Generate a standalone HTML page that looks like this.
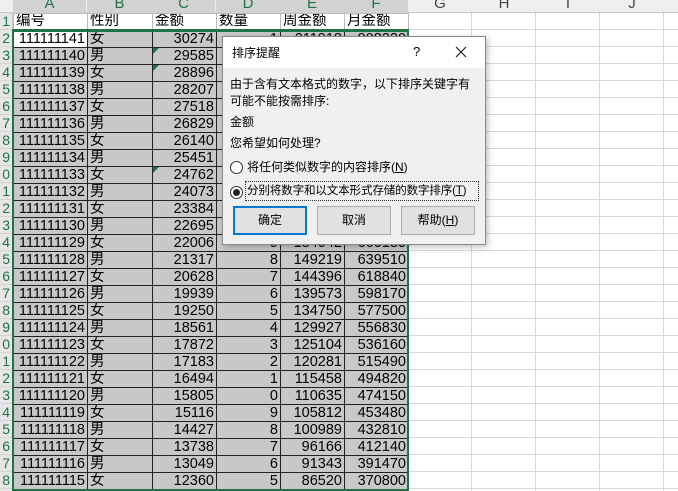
<!DOCTYPE html>
<html><head><meta charset="utf-8">
<style>
*{margin:0;padding:0;box-sizing:border-box}
body{width:678px;height:491px;overflow:hidden;background:#fff;font-family:"Liberation Sans","Noto Sans CJK SC",sans-serif;position:relative}
.hdr{position:absolute;top:0;left:0;height:13px;width:678px;background:#efefef;border-bottom:1px solid #c6c6c6}
.hdr span{position:absolute;top:-5px;font-size:15px;color:#444;text-align:center}
.hdr span.s{color:#217346;background:#d2d2d2;top:0;height:13px}
.hdr span.s b{position:relative;top:-5px;font-weight:normal}
.rn{position:absolute;left:0;top:13px;width:13px;height:478px;background:#e6e6e6;border-right:1px solid #c6c6c6}
.rn div{height:17px;font-size:14px;color:#217346;line-height:17px;text-align:right;padding-right:2px;overflow:hidden;border-bottom:1px solid #d4d4d4}
.grid{position:absolute;left:13px;top:13px;width:665px;height:478px;
background-image:linear-gradient(#d9d9d9 1px,transparent 1px),linear-gradient(90deg,#d9d9d9 1px,transparent 1px);
background-size:100% 17px,64px 100%;background-position:0 16px,10px 0}
table{position:absolute;left:13px;top:13px;border-collapse:collapse;table-layout:fixed;font-size:14.5px}
td{height:17px;border:1px solid #222;padding:0 2px;line-height:15px;white-space:nowrap;overflow:hidden;background:#c8c8c8;color:#000;text-align:right;position:relative}
td.l{text-align:left}
tr.h td{background:#fff;border-color:#bbb;border-bottom:2px solid #217346}
td.w{background:#fff}
td.t::before{content:"";position:absolute;left:0;top:0;border-top:6px solid #217346;border-right:6px solid transparent}
.sel{position:absolute;left:12px;top:29px;width:397px;height:462px;border:2px solid #217346;pointer-events:none}
.dlg{position:absolute;left:222px;top:36px;width:264px;height:209px;background:#f0f0f0;border:1px solid #8a8a8a;box-shadow:2px 2px 6px rgba(0,0,0,.25);font-size:12px;color:#000;white-space:nowrap}
.tt{height:31px;background:#fff;position:relative}
.tt span{position:absolute;top:7px}
.body{padding:8px 7px;line-height:17px}
.rad{position:absolute;width:13px;height:13px;border:1px solid #333;border-radius:50%;background:#fff}
.btn{position:absolute;top:169px;width:74px;height:29px;background:#e1e1e1;border:1px solid #adadad;text-align:center;line-height:27px}
</style></head><body>
<div class="hdr">
<span class="s" style="left:13px;width:73px"><b>A</b></span>
<span class="s" style="left:87px;width:65px"><b>B</b></span>
<span class="s" style="left:152px;width:63px"><b>C</b></span>
<span class="s" style="left:216px;width:64px"><b>D</b></span>
<span class="s" style="left:280px;width:64px"><b>E</b></span>
<span class="s" style="left:344px;width:64px"><b>F</b></span>
<span style="left:408px;width:64px">G</span>
<span style="left:472px;width:64px">H</span>
<span style="left:536px;width:64px">I</span>
<span style="left:600px;width:64px">J</span>
</div>
<div class="rn"><div>1</div><div>2</div><div>3</div><div>4</div><div>5</div><div>6</div><div>7</div><div>8</div><div>9</div><div>0</div><div>1</div><div>2</div><div>3</div><div>4</div><div>5</div><div>6</div><div>7</div><div>8</div><div>9</div><div>0</div><div>1</div><div>2</div><div>3</div><div>4</div><div>5</div><div>6</div><div>7</div><div>8</div></div>
<div class="grid"></div>
<table>
<colgroup><col style="width:74px"><col style="width:65px"><col style="width:64px"><col style="width:64px"><col style="width:64px"><col style="width:64px"></colgroup>
<tr class="h"><td class="l">编号</td><td class="l">性别</td><td class="l">金额</td><td class="l">数量</td><td class="l">周金额</td><td class="l">月金额</td></tr>
<tr><td class="w">111111141</td><td class="l">女</td><td>30274</td><td>1</td><td>211918</td><td>908220</td></tr>
<tr><td>111111140</td><td class="l">男</td><td class="t">29585</td><td>0</td><td>207095</td><td>887550</td></tr>
<tr><td>111111139</td><td class="l">女</td><td class="t">28896</td><td>9</td><td>202272</td><td>866880</td></tr>
<tr><td>111111138</td><td class="l">男</td><td>28207</td><td>8</td><td>197449</td><td>846210</td></tr>
<tr><td>111111137</td><td class="l">女</td><td>27518</td><td>7</td><td>192626</td><td>825540</td></tr>
<tr><td>111111136</td><td class="l">男</td><td>26829</td><td>6</td><td>187803</td><td>804870</td></tr>
<tr><td>111111135</td><td class="l">女</td><td>26140</td><td>5</td><td>182980</td><td>784200</td></tr>
<tr><td>111111134</td><td class="l">男</td><td>25451</td><td>4</td><td>178157</td><td>763530</td></tr>
<tr><td>111111133</td><td class="l">女</td><td class="t">24762</td><td>3</td><td>173334</td><td>742860</td></tr>
<tr><td>111111132</td><td class="l">男</td><td>24073</td><td>2</td><td>168511</td><td>722190</td></tr>
<tr><td>111111131</td><td class="l">女</td><td>23384</td><td>1</td><td>163688</td><td>701520</td></tr>
<tr><td>111111130</td><td class="l">男</td><td>22695</td><td>0</td><td>158865</td><td>680850</td></tr>
<tr><td>111111129</td><td class="l">女</td><td>22006</td><td>9</td><td>154042</td><td>660180</td></tr>
<tr><td>111111128</td><td class="l">男</td><td>21317</td><td>8</td><td>149219</td><td>639510</td></tr>
<tr><td>111111127</td><td class="l">女</td><td>20628</td><td>7</td><td>144396</td><td>618840</td></tr>
<tr><td>111111126</td><td class="l">男</td><td>19939</td><td>6</td><td>139573</td><td>598170</td></tr>
<tr><td>111111125</td><td class="l">女</td><td>19250</td><td>5</td><td>134750</td><td>577500</td></tr>
<tr><td>111111124</td><td class="l">男</td><td>18561</td><td>4</td><td>129927</td><td>556830</td></tr>
<tr><td>111111123</td><td class="l">女</td><td>17872</td><td>3</td><td>125104</td><td>536160</td></tr>
<tr><td>111111122</td><td class="l">男</td><td>17183</td><td>2</td><td>120281</td><td>515490</td></tr>
<tr><td>111111121</td><td class="l">女</td><td>16494</td><td>1</td><td>115458</td><td>494820</td></tr>
<tr><td>111111120</td><td class="l">男</td><td>15805</td><td>0</td><td>110635</td><td>474150</td></tr>
<tr><td>111111119</td><td class="l">女</td><td>15116</td><td>9</td><td>105812</td><td>453480</td></tr>
<tr><td>111111118</td><td class="l">男</td><td>14427</td><td>8</td><td>100989</td><td>432810</td></tr>
<tr><td>111111117</td><td class="l">女</td><td>13738</td><td>7</td><td>96166</td><td>412140</td></tr>
<tr><td>111111116</td><td class="l">男</td><td>13049</td><td>6</td><td>91343</td><td>391470</td></tr>
<tr><td>111111115</td><td class="l">女</td><td>12360</td><td>5</td><td>86520</td><td>370800</td></tr>
</table>
<div class="sel"></div>
<div class="dlg">
<div class="tt"><span style="left:9px">排序提醒</span><span style="left:190px;font-size:13px">?</span>
<svg style="position:absolute;left:232px;top:9px" width="12" height="12" viewBox="0 0 12 12"><path d="M1 1L11 11M11 1L1 11" stroke="#222" stroke-width="1.2" fill="none"/></svg></div>
<div class="body">
<div>由于含有文本格式的数字，以下排序关键字有<br>可能不能按需排序:</div>
<div style="margin-top:4px">金额</div>
<div style="margin-top:4px">您希望如何处理?</div>
</div>
<div class="rad" style="left:7px;top:124px"></div>
<div style="position:absolute;left:24px;top:121px">将任何类似数字的内容排序(<u>N</u>)</div>
<div class="rad" style="left:7px;top:149px"><div style="width:7px;height:7px;border-radius:50%;background:#222;margin:2px"></div></div>
<div style="position:absolute;left:22px;top:144px;width:234px;height:20px;border:1px dotted #333;padding:1px 0 0 1px;line-height:16px;font-size:11.6px;letter-spacing:-0.2px;overflow:hidden">分别将数字和以文本形式存储的数字排序(<u>T</u>)</div>
<div class="btn" style="left:10px;border:2px solid #0078d7;line-height:25px">确定</div>
<div class="btn" style="left:94px">取消</div>
<div class="btn" style="left:178px">帮助(<u>H</u>)</div>
</div>
</body></html>
